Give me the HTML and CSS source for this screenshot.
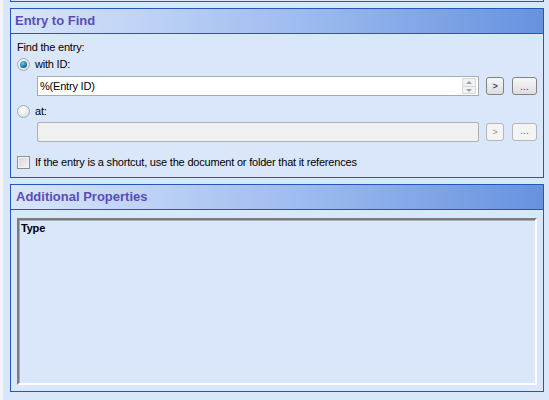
FILE: index.html
```html
<!DOCTYPE html>
<html>
<head>
    <meta charset="UTF-8">
    <title>Find Entry</title>
    <link rel="stylesheet" href="styles.css">
</head>
<body>
    <div class="page">
        <div class="panel prev"></div>

        <div class="panel">
            <div class="panel-header">Entry to Find</div>
            <div class="panel-body">
                <div class="row first">Find the entry:</div>
                <div class="row option">
                    <span class="radio checked"></span>
                    <span>with ID:</span>
                </div>
                <div class="field-row">
                    <div class="field">
                        <span class="field-text">%(Entry ID)</span>
                        <span class="spinner">
                            <span class="spin up"></span>
                            <span class="spin down"></span>
                        </span>
                    </div>
                    <button class="btn small"><span class="chevron">&gt;</span></button>
                    <button class="btn wide"><span class="dots">...</span></button>
                </div>
                <div class="row option gap">
                    <span class="radio"></span>
                    <span>at:</span>
                </div>
                <div class="field-row tight">
                    <div class="field disabled"></div>
                    <button class="btn small disabled"><span class="chevron">&gt;</span></button>
                    <button class="btn wide disabled"><span class="dots">...</span></button>
                </div>
                <div class="row option check-row">
                    <span class="checkbox"></span>
                    <span>If the entry is a shortcut, use the document or folder that it references</span>
                </div>
            </div>
        </div>

        <div class="panel">
            <div class="panel-header second">Additional Properties</div>
            <div class="panel-body list-wrap">
                <div class="list">
                    <div class="list-head">Type</div>
                </div>
            </div>
        </div>
    </div>
</body>
</html>
```

FILE: styles.css
```css
body {
    margin: 0;
    background-color: #dae7fb;
    font-family: "Liberation Sans", Arial, sans-serif;
    font-size: 11px;
    color: #000;
}
.page {
    width: 549px;
    height: 400px;
    box-sizing: border-box;
    border-left: 3px solid #f3f5f9;
    padding-left: 7px;
    padding-right: 5px;
    display: flex;
    flex-direction: column;
    gap: 6px;
}
.panel {
    border: 1px solid #2257c2;
}
.panel.prev {
    border-top: none;
    height: 1px;
}
.panel-header {
    height: 24px;
    line-height: 24px;
    border-bottom: 1px solid #2257c2;
    background: linear-gradient(to right, #d9e6fb, #9dbbef 55%, #6692df);
    color: #5a4cb8;
    font-size: 13px;
    font-weight: bold;
    padding-left: 4px;
}
.panel-header.second {
    padding-left: 5px;
}
.panel-body {
    padding: 6px 6px 8px 6px;
    display: flex;
    flex-direction: column;
    letter-spacing: -0.2px;
}
.row {
    height: 14px;
    line-height: 14px;
    display: flex;
    align-items: center;
    gap: 5px;
}
.row.option {
    margin-top: 3px;
}
.row.gap {
    margin-top: 8px;
}
.row.check-row {
    margin-top: 13px;
}
.radio {
    width: 13px;
    height: 13px;
    box-sizing: border-box;
    border-radius: 50%;
    border: 1px solid #a2abb5;
    background: radial-gradient(circle at 40% 35%, #ffffff, #dcdfe3 80%);
    display: flex;
    align-items: center;
    justify-content: center;
}
.radio.checked::after {
    content: "";
    width: 7px;
    height: 7px;
    border-radius: 50%;
    background: radial-gradient(circle at 40% 35%, #6fd0f2, #1b6fa3 60%, #0d3d66);
}
.checkbox {
    width: 13px;
    height: 13px;
    box-sizing: border-box;
    border: 1px solid #8e8f8f;
    background: linear-gradient(135deg, #d4d7db, #f3f4f5);
    box-shadow: inset 0 0 0 1px #f2f3f4;
}
.field-row {
    display: flex;
    align-items: center;
    margin-top: 5px;
    padding-left: 20px;
}
.field-row.tight {
    margin-top: 4px;
}
.field {
    width: 443px;
    height: 20px;
    box-sizing: border-box;
    border: 1px solid #a6abb2;
    background: #fff;
    display: flex;
    align-items: center;
    justify-content: space-between;
    padding: 0 2px 0 2px;
}
.field.disabled {
    background: #f0f0f0;
    border-color: #adb0b3;
    border-radius: 2px;
}
.spinner {
    width: 14px;
    height: 16px;
    display: flex;
    flex-direction: column;
    border: 1px solid #d6d8db;
    box-sizing: border-box;
    background: #f1f2f3;
}
.spin {
    flex: 1;
    position: relative;
}
.spin.up {
    border-bottom: 1px solid #d6d8db;
}
.spin::after {
    content: "";
    position: absolute;
    left: 3px;
    top: 2px;
    border-left: 3px solid transparent;
    border-right: 3px solid transparent;
}
.spin.up::after {
    border-bottom: 3px solid #9aa0a6;
}
.spin.down::after {
    border-top: 3px solid #9aa0a6;
}
.btn {
    height: 18px;
    box-sizing: border-box;
    border: 1px solid #7f8286;
    border-radius: 3px;
    background: linear-gradient(#f6f6f6, #ebebeb 50%, #dcdcdc);
    padding: 0;
    font-family: "Liberation Sans", Arial, sans-serif;
    display: flex;
    align-items: center;
    justify-content: center;
}
.btn.small {
    width: 18px;
    margin-left: 7px;
}
.btn.wide {
    width: 25px;
    margin-left: 8px;
    align-items: flex-end;
}
.btn.disabled {
    border-color: #b3b6ba;
    background: #f4f4f4;
}
.chevron {
    font-size: 9px;
    font-weight: bold;
    color: #1c4f9a;
    line-height: 9px;
}
.btn.disabled .chevron {
    color: #8a8f99;
    font-weight: normal;
}
.dots {
    font-size: 10px;
    color: #7a2a8c;
    line-height: 10px;
    padding-bottom: 2px;
}
.btn.disabled .dots {
    color: #4a5fb0;
    padding-bottom: 4px;
}
.list-wrap {
    padding: 8px 6px 6px 6px;
}
.list {
    height: 167px;
    box-sizing: border-box;
    border-left: 2px solid #7b7b7b;
    border-top: 2px solid #7b7b7b;
    border-right: 2px solid #ffffff;
    border-bottom: 2px solid #ffffff;
    box-shadow: inset 1px 1px 0 #a9a9a9;
}
.list-head {
    font-weight: bold;
    padding: 1px 0 0 2px;
    line-height: 14px;
}
```
